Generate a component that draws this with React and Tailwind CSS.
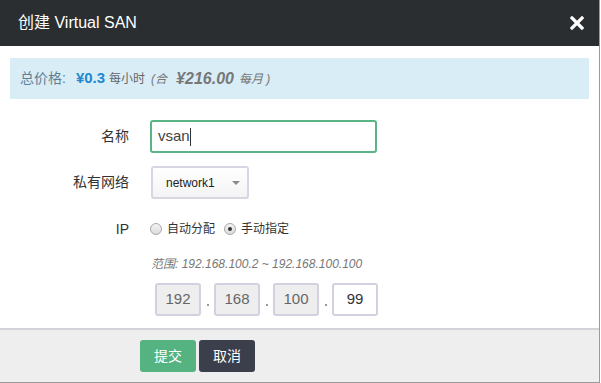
import React from 'react';

const font = { fontFamily: '"Liberation Sans", Arial, "Noto Sans CJK SC", sans-serif' };

const Radio = ({ checked, label }) => (
  <label className="flex items-center mr-[9px]">
    <span className="w-[12px] h-[12px] rounded-full border border-[#a9a9a9] bg-gradient-to-b from-[#f4f4f4] to-[#dcdcdc] flex items-center justify-center">
      {checked && <span className="w-[4px] h-[4px] rounded-full bg-[#333]" />}
    </span>
    <span className="ml-[5px] text-[12px] text-[#333]">{label}</span>
  </label>
);

const IpBox = ({ value, editable }) => (
  <div
    className={`w-[46px] h-[33px] rounded-[3px] border-2 border-[#d3d1df] flex items-center justify-center text-[15px] ${
      editable ? 'bg-white text-[#333]' : 'bg-[#eeeeee] text-[#666]'
    }`}
  >
    {value}
  </div>
);

const Dot = () => (
  <div className="w-[13px] h-[33px] flex items-end justify-center pb-[10px]">
    <span className="w-[2px] h-[2px] bg-[#999]" />
  </div>
);

export default function App() {
  return (
    <div style={font} className="w-[600px] h-[383px] bg-white border-r border-b border-[#9a9a9a] flex flex-col">
      {/* header */}
      <div className="h-[46px] shrink-0 bg-[#2b2e30] flex items-center justify-between pl-[18px] pr-[15px]">
        <span className="text-white text-[16px]">创建 Virtual SAN</span>
        <svg width="14" height="14" viewBox="0 0 14 14">
          <path d="M2 2L12 12M12 2L2 12" stroke="#fff" strokeWidth="3.2" strokeLinecap="square" />
        </svg>
      </div>

      {/* price */}
      <div className="mt-[12px] mx-[10px] h-[41px] bg-[#d9edf7] flex items-center pl-[10px] text-[#5f7f92]">
        <span className="text-[14px]">总价格:</span>
        <span className="ml-[10px] text-[15px] font-bold text-[#2089d0]">¥0.3</span>
        <span className="ml-[4px] text-[12px] text-[#666]">每小时</span>
        <span className="ml-[6px] text-[12px] italic text-[#777]">(合</span>
        <span className="ml-[9px] text-[16px] font-bold italic text-[#777]">¥216.00</span>
        <span className="ml-[5px] text-[12px] italic text-[#777]">每月 )</span>
      </div>

      {/* name */}
      <div className="mt-[21px] flex items-center">
        <div className="w-[129px] text-right text-[14px] text-[#333]">名称</div>
        <div className="ml-[21px] w-[227px] h-[33px] rounded-[3px] border-2 border-[#5bb486] flex items-center pl-[6px] text-[15px] text-[#444]">
          vsan<span className="w-px h-[18px] bg-[#333]" />
        </div>
      </div>

      {/* network */}
      <div className="mt-[13px] flex items-center">
        <div className="w-[129px] text-right text-[14px] text-[#333]">私有网络</div>
        <div className="ml-[22px] w-[98px] h-[33px] rounded-[3px] border-2 border-[#d8d6e2] bg-gradient-to-b from-white to-[#f4f4f4] flex items-center pl-[13px] text-[12px] text-[#222]">
          network1
          <span className="ml-[17px] w-0 h-0 border-x-[4px] border-x-transparent border-t-[4px] border-t-[#8a8a8a]" />
        </div>
      </div>

      {/* ip mode */}
      <div className="mt-[20px] h-[20px] flex items-center">
        <div className="w-[129px] text-right text-[14px] text-[#333]">IP</div>
        <div className="ml-[21px] flex items-center">
          <Radio label="自动分配" />
          <Radio checked label="手动指定" />
        </div>
      </div>

      {/* range */}
      <div className="mt-[17px] pl-[151px] text-[12px] italic text-[#777] leading-[16px]">
        范围: 192.168.100.2 ~ 192.168.100.100
      </div>

      {/* ip inputs */}
      <div className="mt-[11px] pl-[155px] flex">
        <IpBox value="192" />
        <Dot />
        <IpBox value="168" />
        <Dot />
        <IpBox value="100" />
        <Dot />
        <IpBox value="99" editable />
      </div>

      {/* footer */}
      <div className="mt-[12px] flex-1 bg-[#eeeeee] border-t-2 border-[#d2d2d8] pl-[140px] pt-[10px]">
        <div className="flex gap-[3px]">
          <button className="w-[56px] h-[32px] rounded-[3px] bg-[#54b381] text-white text-[14px]">提交</button>
          <button className="w-[56px] h-[32px] rounded-[3px] bg-[#3b3e4b] text-white text-[14px]">取消</button>
        </div>
      </div>
    </div>
  );
}
